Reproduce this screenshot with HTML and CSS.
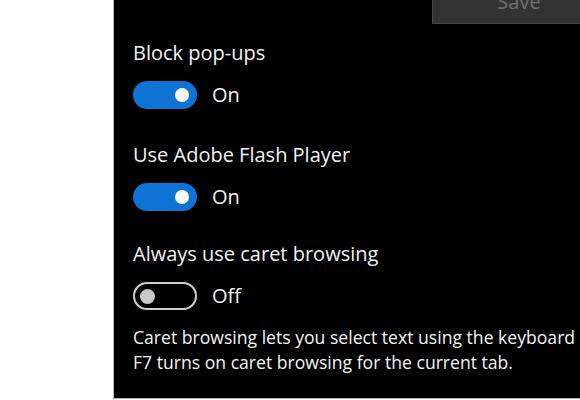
FILE: index.html
```html
<!DOCTYPE html>
<html lang="en">
<head>
<meta charset="utf-8">
<title>Advanced settings</title>
<link rel="stylesheet" href="styles.css">
</head>
<body>
<div class="page">
  <section class="panel">
    <div class="actions">
      <button class="save" type="button">Save</button>
    </div>
    <div class="setting first">
      <div class="label">Block pop-ups</div>
      <div class="switch-row">
        <span class="switch on"><span class="knob"></span></span>
        <span class="state">On</span>
      </div>
    </div>
    <div class="setting">
      <div class="label">Use Adobe Flash Player</div>
      <div class="switch-row">
        <span class="switch on"><span class="knob"></span></span>
        <span class="state">On</span>
      </div>
    </div>
    <div class="setting tight">
      <div class="label">Always use caret browsing</div>
      <div class="switch-row">
        <span class="switch off"><span class="knob"></span></span>
        <span class="state">Off</span>
      </div>
    </div>
    <p class="note">Caret browsing lets you select text using the keyboard<br>F7 turns on caret browsing for the current tab.</p>
  </section>
</div>
</body>
</html>
```
FILE: styles.css
```css
html, body {
  margin: 0;
  padding: 0;
  background: #ffffff;
  overflow: hidden;
}

body {
  font-family: "Open Sans", "Noto Sans", "Liberation Sans", sans-serif;
  width: 580px;
  height: 400px;
}

.page {
  display: flex;
  height: 400px;
}

.panel {
  margin-left: 113px;
  width: 466px;
  height: 398px;
  background: #000000;
  border-left: 1px solid #b8b8b8;
  border-bottom: 1px solid #b8b8b8;
  padding-left: 19px;
  box-sizing: content-box;
  color: #ffffff;
  display: flex;
  flex-direction: column;
  overflow: hidden;
}

.actions {
  display: flex;
  justify-content: flex-end;
  height: 24px;
}

.save {
  margin-top: -16px;
  width: 148px;
  height: 40px;
  box-sizing: border-box;
  padding: 4px 0 8px 25px;
  background: #333333;
  border: 1px solid #474747;
  border-top: none;
  border-right: none;
  color: #707070;
  font-family: inherit;
  font-size: 20px;
  line-height: 28px;
  text-align: center;
  flex-shrink: 0;
}

.setting {
  margin-top: 32px;
  display: flex;
  flex-direction: column;
}

.setting.first {
  margin-top: 15px;
}

.setting.tight {
  margin-top: 29px;
}

.label {
  font-size: 20px;
  line-height: 28px;
  color: #f4f4f4;
  white-space: nowrap;
}

.switch-row {
  margin-top: 14px;
  display: flex;
  align-items: center;
  gap: 15px;
  height: 28px;
}

.switch {
  width: 64px;
  height: 28px;
  border-radius: 14px;
  box-sizing: border-box;
  display: flex;
  align-items: center;
  flex-shrink: 0;
}

.switch.on {
  background: #0f72d5;
  justify-content: flex-end;
  padding: 0 8px;
}

.switch.on .knob {
  width: 14px;
  height: 14px;
  border-radius: 50%;
  background: #ffffff;
}

.switch.off {
  border: 2px solid #cfcfcf;
  justify-content: flex-start;
  padding: 0 5px;
}

.switch.off .knob {
  width: 15px;
  height: 15px;
  border-radius: 50%;
  background: #c9c9c9;
}

.state {
  font-size: 20px;
  line-height: 28px;
  color: #f4f4f4;
}

.note {
  margin: 15px 0 0 0;
  font-size: 17.6px;
  line-height: 25px;
  color: #f4f4f4;
  white-space: nowrap;
}
```
